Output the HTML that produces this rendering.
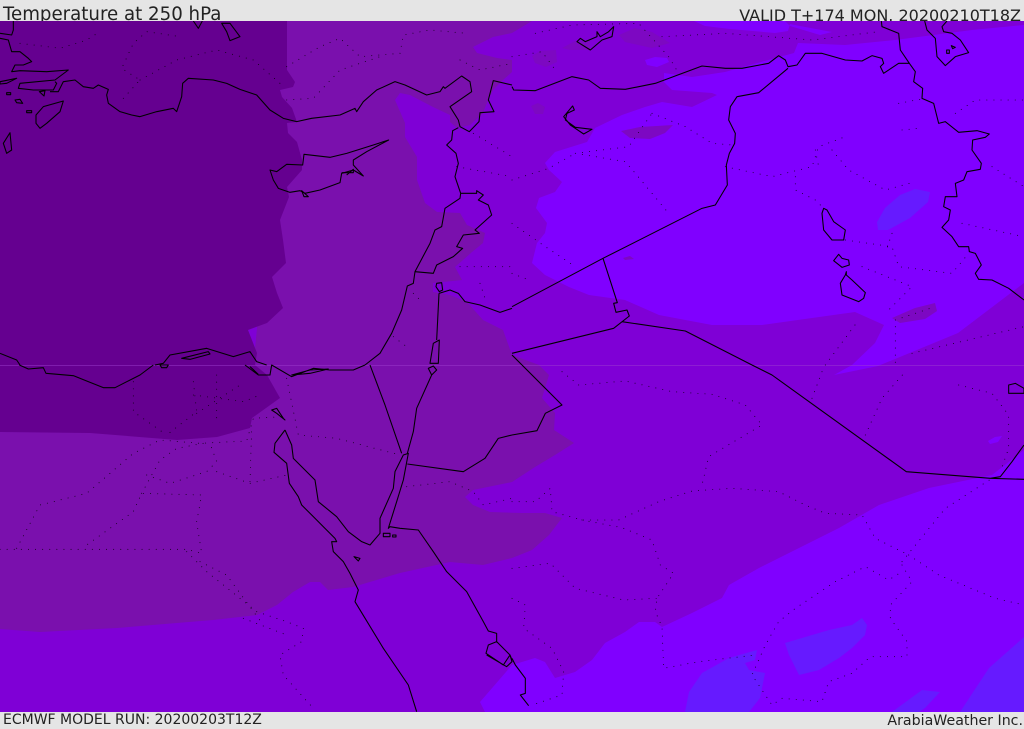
<!DOCTYPE html>
<html lang="en"><head><meta charset="utf-8"><title>Temperature at 250 hPa</title>
<style>
html,body{margin:0;padding:0;background:#e5e5e5}
#w{position:relative;width:1024px;height:729px;overflow:hidden;background:#e5e5e5;font-family:"DejaVu Sans","Liberation Sans",sans-serif;color:#222}
#w div{position:absolute;white-space:nowrap}
svg{position:absolute;left:0;top:21px}
</style></head><body><div id="w">
<div style="left:3px;top:4px;font-size:18.2px;line-height:22px">Temperature at 250 hPa</div>
<div style="right:3px;top:5px;font-size:16px;line-height:22px">VALID T+174 MON. 20200210T18Z</div>
<div style="left:3px;top:712px;font-size:14px;line-height:17px">ECMWF MODEL RUN: 20200203T12Z</div>
<div style="right:1px;top:713px;font-size:14.2px;line-height:17px">ArabiaWeather Inc.</div>
<svg width="1024" height="691" viewBox="0 21 1024 691">
<rect x="0" y="21" width="1024" height="691" fill="#8000ff"/>
<path fill="#7f00d6" d="M0,21H1024V25L972,30 895,40 845,45 798,43 794,53 725,72 692,77 664,73 664,82 672,90 712,93 717,95 692,107 662,102 645,107 622,115 595,128 587,142 555,152 545,163 549,170 562,182 555,192 539,198 536,208 547,223 545,233 537,243 532,263 545,275 569,287 589,295 625,300 659,315 712,325 762,325 812,318 855,312 884,325 875,343 852,365 834,375 878,366 958,333 1024,283V450L992,475 929,488 879,505 839,528 799,548 759,568 729,585 722,598 692,613 662,627 655,622 639,622 625,632 605,643 592,660 575,672 555,678 545,662 535,658 512,665 480,702 485,712H0Z"/>
<path fill="#8000ff" d="M694,21 705,26 730,29 775,33 788,31 790,24 800,26 832,32 820,35 790,26 785,21Z"/>
<path fill="#8000ff" d="M645,60 655,57 667,58 669,62 657,67 647,65Z"/>
<path fill="#8000ff" d="M988,441 995,437 1002,436 998,442 990,444Z"/>
<path fill="#7a10ad" d="M287,21H532L512,33 493,37 473,47 477,53 497,58 512,60 512,72 503,80 493,90 488,100 483,113 470,125 457,128 450,122 450,115 433,107 410,95 400,93 395,100 405,123 405,137 417,157 417,180 425,203 437,212 460,213 467,225 485,233 483,243 472,252 463,260 455,267 462,280 433,283 433,292 450,295 467,302 483,320 503,330 512,355 539,365 549,375 542,398 555,413 554,430 574,443 555,455 535,467 512,482 473,490 465,497 473,505 490,512 522,513 545,513 562,518 549,535 532,550 512,558 483,565 450,562 400,573 353,587 328,590 320,582 310,582 293,592 277,605 257,615 213,620 117,628 40,632 0,629V400H250Z"/>
<path fill="#650090" d="M0,21H287V62L287,70 295,82 293,87 280,90 282,97 292,108 297,122 287,123 288,133 297,142 302,160 302,170 287,187 289,197 280,220 283,240 286,263 272,277 277,293 283,308 267,323 248,330 257,353 255,365 267,375 280,398 252,418 250,428 217,437 177,440 90,433 0,432Z"/>
<g fill="#7d08c2">
<path d="M619,35 635,28 652,32 670,43 652,48 625,42Z"/>
<path d="M532,56 540,51 556,50 557,62 546,67 535,63Z"/>
<path d="M531,106 538,103 545,107 543,114 535,114Z"/>
<path d="M562,48 575,41 590,40 590,50 570,50Z"/>
<path d="M621,131 640,127 673,125 665,133 650,139 630,138Z"/>
<path d="M892,318 915,308 935,303 937,311 925,319 900,323Z"/>
<path d="M623,258 630,256 634,259 625,260Z"/>
</g>
<g fill="#661aff">
<path d="M877,222 885,208 900,195 915,189 930,192 928,202 910,218 888,230 878,230Z"/>
<path d="M785,643 829,630 852,625 862,618 867,625 865,635 852,648 839,658 819,670 799,675 789,655Z"/>
<path d="M685,712 689,692 702,673 729,658 757,650 755,660 745,663 749,670 765,673 760,698 749,712Z"/>
<path d="M892,712 922,690 940,692 925,708 919,712Z"/>
<path d="M960,712 989,668 1024,637V712Z"/>
</g>
<rect x="0" y="365" width="1024" height="1" fill="#a040d0" opacity=".45"/>

<!-- dotted internal borders -->
<g fill="none" stroke="#000" stroke-linecap="round">
<g transform="scale(.33333)" stroke-width="2.6" stroke-dasharray="0.3 21">
<path d="M60,130 180,145 260,120 300,95M370,295 420,240 365,205 400,130 440,95 540,110M420,240 530,180 650,150 760,180 840,250M860,200 960,140 1020,115 1080,170 1140,165 1200,160 1210,105 1290,90 1400,100M860,300 940,295 1020,210 1140,170M1380,180 1440,210 1536,190M1420,400 1536,470M1370,500 1536,530M1240,880 1260,900M1180,1010 1220,1040M1380,800 1536,800M1440,850 1460,910"/>
</g>
<g transform="translate(512,0) scale(.33333)" stroke-width="2.6" stroke-dasharray="0.3 21">
<path d="M0,170 90,155 130,210M70,100 180,75 380,70 470,170 500,220M450,110 640,100 900,120 1100,95M420,340 520,380 600,430 660,435M190,460 340,485 370,520 470,640M190,460 350,440 420,340M0,540 110,505 190,460M0,670 100,740 190,800M640,500 780,530 900,500 920,440 1000,410M910,450 920,500M850,530 850,570 910,600 930,620M960,450 1010,510 1120,570 1210,545M1160,310 1240,295M1170,390 1220,385M1330,340 1390,300 1536,300M1440,500 1536,560M1350,670 1536,710M1000,720 1140,740 1160,800 1320,820 1370,760M1050,800 1200,860 1120,940M1140,700 1120,760M1150,960 1270,920M1150,980 1150,1095M940,1095 1040,960M1200,1060 1536,980M0,820 50,840"/>
</g>
<g transform="translate(0,365) scale(.33333)" stroke-width="2.6" stroke-dasharray="0.3 21">
<path d="M0,553H560L605,565 590,470 605,390 425,385 400,440 260,540M50,550 120,420 260,385 400,265 480,225 600,235 740,228 760,160 850,155M440,330 510,355 620,320 650,290 630,235M425,385 480,285 530,250 610,235M560,560 620,620 720,700 770,740 860,770 910,790 905,830 840,870 850,930 940,1030M600,590 680,630 790,780M650,320 750,355 860,330M750,350 755,190M400,50 400,140 500,210M580,50 590,140 500,210M580,90 730,110 780,90M590,145 720,60M650,30 650,170M860,40 895,210 1010,220 1200,270M1220,365 1350,350 1420,380 1450,420 1536,400M730,760 860,810"/>
</g>
<g transform="translate(512,365) scale(.33333)" stroke-width="2.6" stroke-dasharray="0.3 21">
<path d="M150,20 200,60 340,48 480,80 600,88 700,120 750,180 590,275 570,360M0,410 70,410 115,370 120,440 210,465 320,465 440,410 540,378 660,370 800,380 880,420 940,445 1050,450 1090,520 1190,570M210,465 330,488 420,525 445,600 485,625 435,700 430,740 450,785 455,910 560,890 730,870M0,610 115,595 190,670 335,705 435,700M0,700 40,720 35,790 120,850 155,920 150,990 60,1020M1190,570 1280,630 1450,700 1536,720M1170,600 1200,650 1135,720 1135,760 1185,830 1185,875 1075,875 1020,925 950,950 930,1010 810,1000 780,1020 720,930 760,840 800,770 850,730 970,650 1060,605 1130,645 1170,620M1170,590 1300,430 1440,340M900,100 930,20M1060,210 1110,100 1180,20M1340,60 1440,85 1490,150 1490,250 1465,320"/>
</g>
</g>

<!-- coasts and borders -->
<g fill="none" stroke="#000" stroke-linejoin="round">
<g transform="scale(.33333)" stroke-width="3.2">
<path d="M0,100 35,105 40,90 40,63M0,115 25,120 35,155 60,155 85,175 95,185 70,195 45,195 35,215 60,212 140,215 205,210 165,240 60,250 55,265 100,270 160,270 170,250 165,245M150,275 175,275 190,245 225,240 250,260 280,265 295,255 325,268 320,285 325,310 360,335 395,345 420,350 470,335 520,325 530,335 545,290 548,250 565,235 640,240 680,250 720,268 770,285 810,330 850,355 890,365 935,355 1020,345 1065,325 1070,335 1090,305 1130,270 1185,245 1215,255 1280,285 1320,275 1330,260 1335,265 1385,228 1410,245 1415,275 1350,320 1375,360 1380,380 1408,395 1437,365 1440,338 1482,335 1465,300 1480,242 1536,255"/>
<path d="M810,510 820,540 835,565 870,577 900,572 915,580 960,570 1020,548 1025,520 1060,510 1090,528 1060,495 1060,480 1100,455 1166,420 1120,435 1040,460 990,472 912,463 908,495 860,493 830,515Z"/>
<path d="M1025,518 1060,518 1060,508 1040,525M905,572 925,590 912,590Z"/>
<path d="M1375,383 1358,392 1355,420 1340,435 1368,460 1375,490 1365,530 1382,580 1380,595 1335,625 1325,680 1305,690 1290,730 1245,815 1240,850 1222,858 1205,930 1175,1000 1140,1060 1095,1095"/>
<path d="M1382,580 1430,580 1430,572 1450,585 1435,600 1465,615 1475,645 1425,690 1438,700 1390,705 1370,740 1388,745 1360,770 1310,795 1300,820 1245,815"/>
<path d="M1317,880 1310,1020M1290,1090 1300,1030 1318,1020 1315,1090ZM1310,850 1325,848 1328,870 1318,875 1308,860ZM1317,880 1350,870 1375,880 1395,905 1440,915 1500,937 1536,925"/>
<path d="M108,345 130,320 190,303 180,335 140,370 120,385 108,370ZM10,430 30,398 35,450 20,460ZM665,70 690,70 720,110 690,122 680,95ZM580,63 595,85 607,63M80,332H95V338H80ZM20,278H32V284H20ZM45,300 60,298 68,310 50,308ZM118,275 135,272 132,288ZM0,245 50,235 20,250 0,252Z"/>
<path d="M0,1060 50,1080 60,1095M465,1095 490,1090 510,1065 620,1045 700,1070 750,1055 770,1085 800,1095M545,1075 625,1055 630,1062 570,1078Z"/>
</g>
<g transform="translate(512,0) scale(.33333)" stroke-width="3.2">
<path d="M0,260 5,270 70,272 180,230 230,240 265,265 340,268 430,250 570,198 640,205 690,205 770,190 800,167 820,180 828,200 855,195 880,160 930,160 1000,180 1050,183 1080,167 1110,175 1115,190 1105,200 1115,220 1160,190 1192,190 1165,150 1160,100 1110,80 1108,63M1192,190 1210,215 1205,245 1232,265 1230,295 1265,310 1280,370 1300,365 1340,397 1395,392 1432,402 1420,412 1382,420 1380,450 1408,490 1405,508 1365,515 1355,540 1330,550 1335,590 1300,590 1295,620 1315,630 1310,660 1290,682 1320,710 1340,740 1370,740 1372,755 1390,760 1408,795 1390,820 1400,838 1440,840 1490,865 1536,900"/>
<path d="M1238,63 1245,90 1270,115 1275,170 1300,197 1330,170 1370,158 1345,120 1320,100 1295,95 1290,80 1305,63M1304,150H1312V160H1304ZM1318,137 1330,142 1322,146Z"/>
<path d="M195,125 205,115 220,125 255,110 255,95 265,110 290,95 305,80 300,110 270,120 235,150ZM182,318 187,330 165,340 160,360 190,382 240,388 215,402 175,375 155,350 180,320Z"/>
<path d="M828,205 740,278 675,290 655,320 650,360 670,400 668,430 652,460 643,495 646,555 610,615 570,625 273,775 0,920M273,775 316,908 305,910 312,937 345,930 352,948 305,985 0,1060M330,965 520,993 720,1095M0,1065 30,1095"/>
<path d="M935,625 945,630 965,665 1000,690 995,720 960,720 935,690 930,640ZM980,763 990,775 1010,780 1012,795 990,802 965,782ZM1003,815 1003,825 1020,840 1060,878 1055,895 1040,905 990,885 985,850 1000,825Z"/>
</g>
<g transform="translate(0,365) scale(.33333)" stroke-width="3.2">
<path d="M58,0 85,12 130,8 138,25 220,32 310,68 345,68 420,30 460,0M735,0 775,30 810,30 815,0 875,35 940,10 990,15 1060,15 1095,0M875,30 930,25 985,12 930,15ZM480,0 505,0 500,8 485,8ZM750,5 775,28"/>
<path d="M815,135 830,130 850,160 855,165 830,145Z"/>
<path d="M855,195 825,235 822,262 860,295 868,355 895,395 905,420 940,455 975,490 1005,520 1010,530 995,530 1000,560 1030,590 1050,625 1075,675 1065,710 1150,850 1225,960 1250,1040"/>
<path d="M855,195 875,240 880,280 945,345 955,410 1010,455 1045,500 1085,530 1110,540 1140,505 1140,460 1180,370 1185,320 1210,270 1225,265 1210,345 1190,410 1165,490 1170,485 1200,490 1255,495 1300,560 1340,620 1400,680 1450,770 1465,798 1490,805 1490,830 1465,840 1458,865 1510,900 1530,870 1536,885M1490,830 1530,870 1536,890 1520,905 1460,870"/>
<path d="M1110,0 1155,120 1205,265M1285,10 1300,3 1310,15 1295,30ZM1295,30 1250,130 1240,200 1222,265M1222,297 1390,320 1455,280 1495,220 1536,210"/>
<path d="M1150,505H1170V515H1150ZM1178,510H1188V516H1178ZM1062,575 1080,580 1075,588Z"/>
</g>
<g transform="translate(512,365) scale(.33333)" stroke-width="3.2">
<path d="M720,0 780,30 1183,320 1435,340 1536,343M1536,240 1500,290 1465,335 1435,340M30,0 150,120 100,145 75,197 0,210M1490,60 1510,55 1536,70V85H1490ZM0,880 10,900 40,940 40,985 25,990 50,1022"/>
</g>
</g>
</svg>
</div></body></html>
